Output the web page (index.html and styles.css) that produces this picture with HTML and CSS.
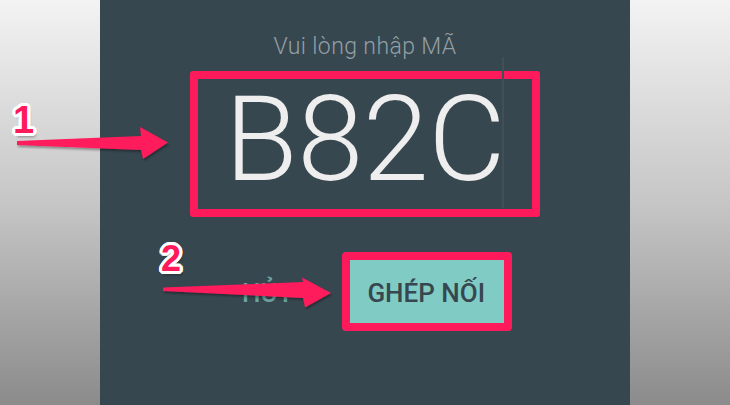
FILE: index.html
```html
<!DOCTYPE html>
<html lang="vi">
<head>
<meta charset="utf-8">
<title>Ghép nối</title>
<link rel="stylesheet" href="styles.css">
</head>
<body>
<div class="page">
  <div class="side"></div>
  <main class="dialog">
    <p class="title">Vui lòng nhập MÃ</p>
    <div class="code-box"><span class="code">B82C</span></div>
    <div class="actions">
      <span class="btn-cancel">HỦY</span>
      <span class="btn-pair">GHÉP NỐI</span>
    </div>
    <div class="cursor"></div>
  </main>
  <div class="side"></div>

  <svg class="arrows" width="730" height="405" viewBox="0 0 730 405" aria-hidden="true">
    <defs>
      <filter id="sh" x="-10%" y="-30%" width="130%" height="170%">
        <feDropShadow dx="1" dy="2" stdDeviation="1.2" flood-color="#000" flood-opacity="0.35"/>
      </filter>
    </defs>
    <polygon filter="url(#sh)" fill="#ff1a5c" points="17,141 141,136 140,127 168,142.5 143,159 141,150 17,145"/>
    <polygon filter="url(#sh)" fill="#ff1a5c" points="163,287.5 303,282 302,277.5 331,293 305,307.5 303,298 163,291"/>
  </svg>
  <span class="num num-1">1</span>
  <span class="num num-2">2</span>
</div>
</body>
</html>
```

FILE: styles.css
```css
html, body {
  margin: 0;
  padding: 0;
}

body {
  width: 730px;
  height: 405px;
  overflow: hidden;
  font-family: Roboto, "Noto Sans", "Liberation Sans", sans-serif;
}

.page {
  position: relative;
  display: flex;
  width: 730px;
  height: 405px;
}

.side {
  width: 100px;
  background: linear-gradient(to bottom, #f3f3f3 0%, #c6c6c6 50%, #8b8b8b 100%);
}

.dialog {
  position: relative;
  width: 530px;
  background: #37474f;
  display: flex;
  flex-direction: column;
  align-items: center;
  padding-top: 35px;
  box-sizing: border-box;
}

.title {
  margin: 0;
  font-size: 23px;
  line-height: 24px;
  font-weight: 300;
  letter-spacing: 0.4px;
  color: #939fa5;
}

.code-box {
  margin-top: 12px;
  width: 350px;
  height: 146px;
  box-sizing: border-box;
  border: 8px solid #ff1a5c;
  border-radius: 3px;
  display: flex;
  justify-content: center;
}

.code {
  font-size: 119px;
  line-height: 122px;
  font-weight: 300;
  letter-spacing: -0.5px;
  color: #eeeeee;
  padding-bottom: 8px;
}

.cursor {
  position: absolute;
  left: 402px;
  top: 57px;
  width: 2px;
  height: 151px;
  background: #414f57;
}

.actions {
  margin-top: 35px;
  align-self: stretch;
  display: flex;
  justify-content: flex-end;
  align-items: center;
  padding-right: 118px;
}

.btn-cancel {
  font-size: 26px;
  font-weight: 500;
  color: #6aa3a1;
  margin-right: 49px;
  line-height: 60px;
  padding-top: 3px;
}

.btn-pair {
  border: 8px solid #ff1a5c;
  border-radius: 4px;
  background: #80cbc4;
  color: #37474f;
  font-size: 26px;
  font-weight: 500;
  line-height: 60px;
  padding: 3px 19px 0 17px;
}

.arrows {
  position: absolute;
  left: 0;
  top: 0;
  pointer-events: none;
}

.num {
  position: absolute;
  font-family: "Liberation Sans", Arial, sans-serif;
  font-weight: 700;
  color: #ff1a5c;
  line-height: 1;
  text-shadow:
    3px 0 0 #fff, -3px 0 0 #fff, 0 3px 0 #fff, 0 -3px 0 #fff,
    2px 2px 0 #fff, -2px 2px 0 #fff, 2px -2px 0 #fff, -2px -2px 0 #fff,
    3px 1px 0 #fff, -3px 1px 0 #fff, 3px -1px 0 #fff, -3px -1px 0 #fff,
    1px 3px 0 #fff, -1px 3px 0 #fff, 1px -3px 0 #fff, -1px -3px 0 #fff,
    2px 4px 3px rgba(0, 0, 0, 0.35);
}

.num-1 {
  left: 13px;
  top: 101px;
  font-size: 38px;
}

.num-2 {
  left: 161px;
  top: 241px;
  font-size: 36px;
}
```
